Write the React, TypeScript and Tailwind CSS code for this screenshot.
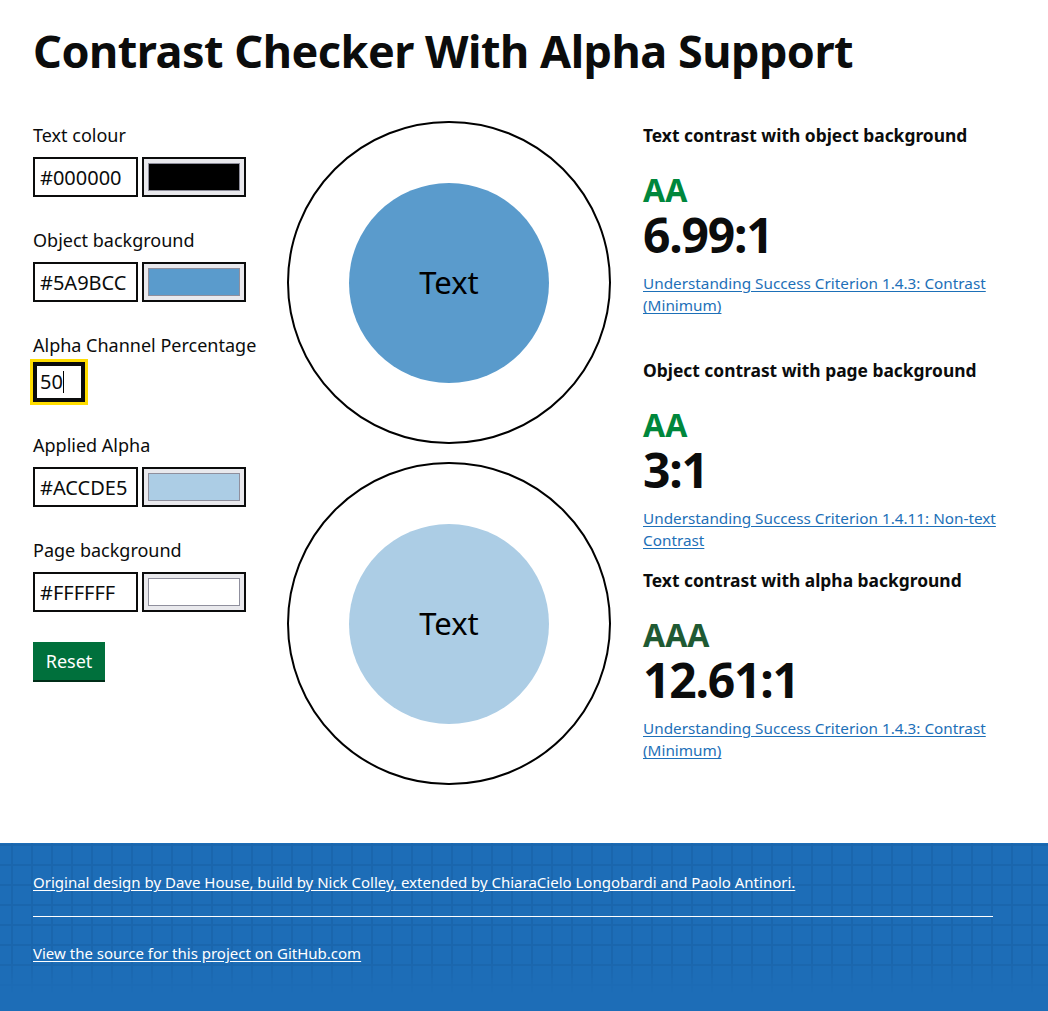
import React from "react";

const FIELDS = [
  { label: "Text colour", hex: "#000000", swatch: "bg-[#000000]" },
  { label: "Object background", hex: "#5A9BCC", swatch: "bg-[#5a9bcc]" },
];

const RESULTS = [
  {
    title: "Text contrast with object background",
    level: "AA",
    ratio: "6.99:1",
    link: "Understanding Success Criterion 1.4.3: Contrast (Minimum)",
  },
  {
    title: "Object contrast with page background",
    level: "AA",
    ratio: "3:1",
    link: "Understanding Success Criterion 1.4.11: Non-text Contrast",
  },
  {
    title: "Text contrast with alpha background",
    level: "AAA",
    ratio: "12.61:1",
    link: "Understanding Success Criterion 1.4.3: Contrast (Minimum)",
  },
];

function ColourField({
  label,
  hex,
  swatch,
}: {
  label: string;
  hex: string;
  swatch: string;
}) {
  return (
    <div className="mb-[31px]">
      <label className="block text-[18px] leading-6 mb-[10px]">{label}</label>
      <div className="flex gap-[4px]">
        <input
          readOnly
          value={hex}
          className="w-[105px] h-[40px] border-2 border-[#0b0c0c] px-[5px] text-[20px] outline-none bg-white"
        />
        <div className="w-[104px] h-[40px] border-2 border-[#0b0c0c] bg-[#e9e9ed] p-[4px]">
          <div className={`w-full h-full border border-[#8f8f9d] ${swatch}`} />
        </div>
      </div>
    </div>
  );
}

function Ring({ fill }: { fill: string }) {
  return (
    <div className="w-[324px] h-[323px] rounded-full border-2 border-black flex items-center justify-center">
      <div
        className={`w-[200px] h-[200px] rounded-full flex items-center justify-center text-[31px] text-black ${fill}`}
      >
        Text
      </div>
    </div>
  );
}

export default function App() {
  return (
    <div
      className="min-h-[1011px] flex flex-col bg-white text-[#0b0c0c]"
      style={{ fontFamily: '"Noto Sans", "Open Sans", sans-serif' }}
    >
      <main className="pl-[33px] pr-[20px] flex-1">
        <h1 className="text-[45px] font-bold leading-none tracking-[-0.5px] pt-[28px] pb-[48px]">
          Contrast Checker With Alpha Support
        </h1>

        <div className="flex">
          <div className="w-[254px] shrink-0 pt-[2px]">
            {FIELDS.map((f) => (
              <ColourField key={f.label} {...f} />
            ))}

            <div className="mb-[31px]">
              <label className="block text-[18px] leading-6 mb-[5px]">
                Alpha Channel Percentage
              </label>
              <div className="w-[52px] h-[40px] border-[4px] border-[#0b0c0c] outline-[3px] outline-solid outline-[#ffdd00] flex items-center px-[3px] text-[20px]">
                50<span className="w-px h-[22px] bg-black" />
              </div>
            </div>

            <ColourField label="Applied Alpha" hex="#ACCDE5" swatch="bg-[#accde5]" />
            <div className="mb-[30px]">
              <label className="block text-[18px] leading-6 mb-[10px]">Page background</label>
              <div className="flex gap-[4px]">
                <input
                  readOnly
                  value="#FFFFFF"
                  className="w-[105px] h-[40px] border-2 border-[#0b0c0c] px-[5px] text-[20px] outline-none bg-white"
                />
                <div className="w-[104px] h-[40px] border-2 border-[#0b0c0c] bg-[#e9e9ed] p-[4px]">
                  <div className="w-full h-full border border-[#8f8f9d] bg-white" />
                </div>
              </div>
            </div>

            <button className="w-[72px] h-[38px] bg-[#00703c] text-white text-[18px] shadow-[0_2px_0_#002d18]">
              Reset
            </button>
          </div>

          <div className="flex flex-col gap-[18px] w-[324px] shrink-0">
            <Ring fill="bg-[#5a9bcc]" />
            <Ring fill="bg-[#accde5]" />
          </div>

          <div className="pl-[32px] w-[390px] pt-[2px]">
            {RESULTS.map((r, i) => (
              <section
                key={r.title}
                className={i === 0 ? "mb-[42px]" : i === 1 ? "mb-[17px]" : ""}
              >
                <h2 className="text-[17.4px] font-bold leading-6">{r.title}</h2>
                <div
                  className={`mt-[24px] text-[32px] font-bold leading-[38px] ${
                    r.level === "AAA" ? "text-[#1f5a33]" : "text-[#00873c]"
                  }`}
                >
                  {r.level}
                </div>
                <div className="text-[48px] font-bold leading-[52px] tracking-[-1.2px]">
                  {r.ratio}
                </div>
                <a
                  href="#"
                  className="block mt-[11px] text-[15.3px] leading-[22px] text-[#1d70b8] underline underline-offset-2"
                >
                  {r.link}
                </a>
              </section>
            ))}
          </div>
        </div>
      </main>

      <footer className="relative mt-[54px] h-[168px] bg-[#1d6db7] text-white">
        <div className="absolute inset-x-0 top-0 h-[150px] bg-[linear-gradient(to_right,#1a64aa_2px,transparent_2px),linear-gradient(to_bottom,#1a64aa_2px,transparent_2px)] bg-[size:20px_20px] bg-[position:11px_1px] [mask-image:linear-gradient(to_bottom,black_80%,transparent)] opacity-70" />
        <div className="relative pl-[33px] pr-[55px] pt-[27px]">
          <a href="#" className="text-[15px] leading-[22px] underline underline-offset-2">
            Original design by Dave House, build by Nick Colley, extended by ChiaraCielo
            Longobardi and Paolo Antinori.
          </a>
          <hr className="mt-[22px] mb-[24px] border-0 h-px bg-white" />
          <a href="#" className="text-[15px] leading-[22px] underline underline-offset-2">
            View the source for this project on GitHub.com
          </a>
        </div>
      </footer>
    </div>
  );
}
